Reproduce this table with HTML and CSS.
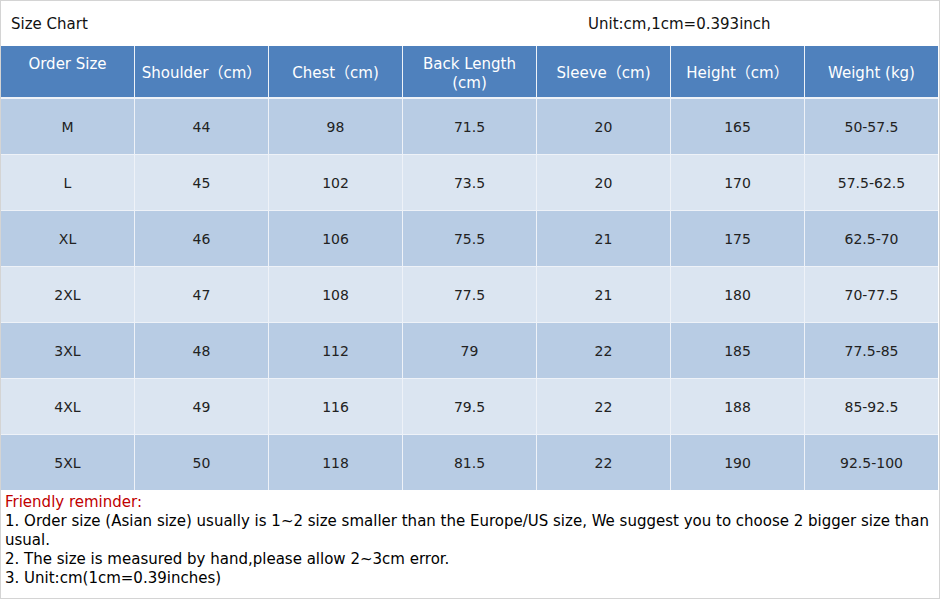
FILE: index.html
```html
<!DOCTYPE html>
<html>
<head>
<meta charset="utf-8">
<link rel="stylesheet" href="styles.css">
</head>
<body>
<div class="sheet">
  <div class="topbar">
    <div class="title">Size Chart</div>
    <div class="unit">Unit:cm,1cm=0.393inch</div>
  </div>
  <div class="chart">
    <div class="hcell top">Order Size</div>
    <div class="hcell">Shoulder（cm）</div>
    <div class="hcell">Chest（cm)</div>
    <div class="hcell">Back Length<br>(cm)</div>
    <div class="hcell">Sleeve（cm)</div>
    <div class="hcell">Height（cm）</div>
    <div class="hcell">Weight (kg)</div>

    <div class="cell dark">M</div><div class="cell dark">44</div><div class="cell dark">98</div><div class="cell dark">71.5</div><div class="cell dark">20</div><div class="cell dark">165</div><div class="cell dark">50-57.5</div>
    <div class="cell light">L</div><div class="cell light">45</div><div class="cell light">102</div><div class="cell light">73.5</div><div class="cell light">20</div><div class="cell light">170</div><div class="cell light">57.5-62.5</div>
    <div class="cell dark">XL</div><div class="cell dark">46</div><div class="cell dark">106</div><div class="cell dark">75.5</div><div class="cell dark">21</div><div class="cell dark">175</div><div class="cell dark">62.5-70</div>
    <div class="cell light">2XL</div><div class="cell light">47</div><div class="cell light">108</div><div class="cell light">77.5</div><div class="cell light">21</div><div class="cell light">180</div><div class="cell light">70-77.5</div>
    <div class="cell dark">3XL</div><div class="cell dark">48</div><div class="cell dark">112</div><div class="cell dark">79</div><div class="cell dark">22</div><div class="cell dark">185</div><div class="cell dark">77.5-85</div>
    <div class="cell light">4XL</div><div class="cell light">49</div><div class="cell light">116</div><div class="cell light">79.5</div><div class="cell light">22</div><div class="cell light">188</div><div class="cell light">85-92.5</div>
    <div class="cell dark">5XL</div><div class="cell dark">50</div><div class="cell dark">118</div><div class="cell dark">81.5</div><div class="cell dark">22</div><div class="cell dark">190</div><div class="cell dark">92.5-100</div>
  </div>
  <div class="notes">
    <div class="remind">Friendly reminder:</div>
    <div>1. Order size (Asian size) usually is 1~2 size smaller than the Europe/US size, We suggest you to choose 2 bigger size than usual.</div>
    <div>2. The size is measured by hand,please allow 2~3cm error.</div>
    <div>3. Unit:cm(1cm=0.39inches)</div>
  </div>
</div>
</body>
</html>
```

FILE: styles.css
```css
html, body {
  margin: 0;
  padding: 0;
  background: #ffffff;
}

.sheet {
  width: 938px;
  height: 597px;
  border: 1px solid #d4d4d4;
  font-family: "DejaVu Sans", "Noto Sans CJK SC", sans-serif;
  color: #111;
  overflow: hidden;
}

.topbar {
  display: flex;
  align-items: center;
  height: 45px;
  font-size: 15px;
}

.title {
  width: 577px;
  padding-left: 10px;
}

.chart {
  display: grid;
  grid-template-columns: repeat(7, 133px);
  grid-template-rows: 52px repeat(7, 55px);
  column-gap: 1px;
  row-gap: 1px;
  width: 937px;
  background: #eef2f8;
}

.hcell {
  background: #4f81bd;
  color: #ffffff;
  font-size: 15px;
  line-height: 19px;
  display: flex;
  align-items: center;
  justify-content: center;
  text-align: center;
  margin-bottom: 1px;
  padding-top: 4px;
}

.hcell.top {
  align-items: flex-start;
  padding-top: 9px;
}

.cell {
  display: flex;
  align-items: center;
  justify-content: center;
  font-size: 14px;
  color: #222;
  padding-top: 1px;
}

.dark {
  background: #b8cce4;
}

.light {
  background: #dbe5f1;
}

.notes {
  padding: 3px 4px 0;
  font-size: 15px;
  line-height: 19px;
  color: #000;
}

.remind {
  color: #c00000;
}
```
